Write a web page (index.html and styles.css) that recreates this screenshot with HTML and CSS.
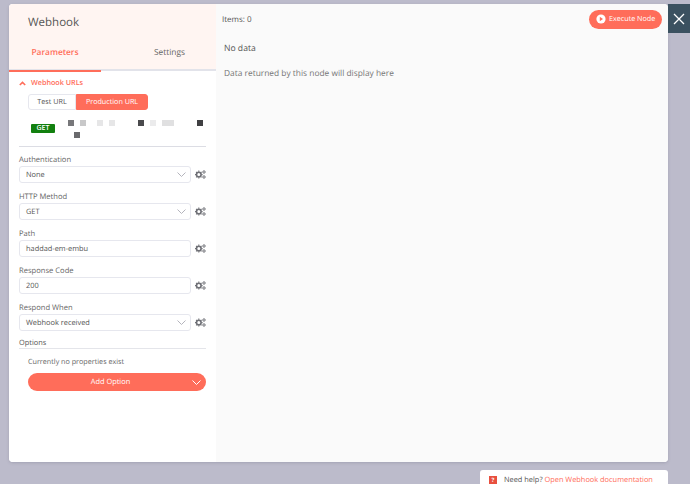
FILE: index.html
```html
<!DOCTYPE html>
<html lang="en">
<head>
<meta charset="utf-8">
<title>Webhook</title>
<link rel="stylesheet" href="styles.css">
</head>
<body>
<svg class="defs" width="0" height="0" aria-hidden="true">
  <symbol id="gears" viewBox="0 0 11 9">
    <g fill="none" stroke="#6f7076">
      <circle cx="3.8" cy="4.6" r="2.3" stroke-width="1.6"/>
      <path d="M3.8.6v1.2M3.8 7.4v1.2M0 4.6h1.2M6.4 4.6h1.2M1.1 1.9l.9.9M5.6 6.4l.9.9M1.1 7.3l.9-.9M5.6 2.8l.9-.9" stroke-width="1.1"/>
      <circle cx="9" cy="2" r="1.2" stroke-width="1"/>
      <circle cx="9" cy="7" r="1.2" stroke-width="1"/>
    </g>
  </symbol>
  <symbol id="chev" viewBox="0 0 9 5">
    <path d="M.5.5l4 4 4-4" fill="none" stroke="currentColor" stroke-width="1"/>
  </symbol>
</svg>
<div class="dialog">
  <aside class="params">
    <header class="head">
      <h1 class="title">Webhook</h1>
      <nav class="tabs">
        <span class="tab active">Parameters</span>
        <span class="tab">Settings</span>
      </nav>
    </header>
    <div class="body">
      <div class="section-title">
        <svg class="up" width="7" height="5" viewBox="0 0 7 5"><path d="M.8 4L3.5 1.4 6.2 4" fill="none" stroke="#ff6d5a" stroke-width="1.6"/></svg>
        <span>Webhook URLs</span>
      </div>
      <div class="toggle">
        <span class="seg">Test URL</span>
        <span class="seg on">Production URL</span>
      </div>
      <div class="url">
        <span class="get">GET</span>
        <div class="redacted">
          <div class="red-row">
            <i class="sq s1 a"></i><i class="sq s2 b"></i><i class="sq s3 c"></i><i class="sq s4 c"></i><i class="sq s5 d"></i><i class="sq s6 e"></i><i class="sq s7 f"></i><i class="sq s8 e"></i>
          </div>
          <div class="red-row second"><i class="sq g"></i></div>
        </div>
      </div>
      <hr class="rule">
      <div class="field">
        <label class="lbl">Authentication</label>
        <div class="row"><div class="input">None<svg class="chev"><use href="#chev"/></svg></div><svg class="gear"><use href="#gears"/></svg></div>
      </div>
      <div class="field">
        <label class="lbl">HTTP Method</label>
        <div class="row"><div class="input">GET<svg class="chev"><use href="#chev"/></svg></div><svg class="gear"><use href="#gears"/></svg></div>
      </div>
      <div class="field">
        <label class="lbl">Path</label>
        <div class="row"><div class="input">haddad-em-embu</div><svg class="gear"><use href="#gears"/></svg></div>
      </div>
      <div class="field">
        <label class="lbl">Response Code</label>
        <div class="row"><div class="input">200</div><svg class="gear"><use href="#gears"/></svg></div>
      </div>
      <div class="field">
        <label class="lbl">Respond When</label>
        <div class="row"><div class="input">Webhook received<svg class="chev"><use href="#chev"/></svg></div><svg class="gear"><use href="#gears"/></svg></div>
      </div>
      <div class="options">Options</div>
      <p class="none">Currently no properties exist</p>
      <div class="add">Add Option<svg class="chev add-chev"><use href="#chev"/></svg></div>
    </div>
  </aside>
  <main class="output">
    <div class="out-top">
      <span class="items">Items: 0</span>
      <span class="exec">
        <svg width="10" height="10" viewBox="0 0 10 10"><circle cx="5" cy="5" r="4.6" fill="#fff"/><path d="M3.8 2.8L7 5 3.8 7.2z" fill="#ff6d5a"/></svg>
        Execute Node
      </span>
    </div>
    <h2 class="nodata">No data</h2>
    <p class="hint">Data returned by this node will display here</p>
  </main>
  <button class="close" aria-label="Close">
    <svg width="12" height="12" viewBox="0 0 12 12"><path d="M1 1l10 10M11 1L1 11" stroke="#fff" stroke-width="1.3"/></svg>
  </button>
</div>
<div class="help">
  <span class="q">?</span>
  <span>Need help? <a class="doc">Open Webhook documentation</a></span>
</div>
</body>
</html>
```
FILE: styles.css
```css
* { box-sizing: border-box; }
html, body { height: 484px; overflow: hidden; }
body {
  margin: 0;
  padding: 4px 0 0 9px;
  background: #bcbbcb;
  font-family: "Open Sans", sans-serif;
  font-size: 8px;
  color: #555;
  text-rendering: geometricPrecision;
}
.defs { position: absolute; }
.dialog {
  position: relative;
  display: flex;
  width: 659px;
  height: 458px;
  background: #fff;
  border-radius: 4px;
  box-shadow: 0 1px 3px rgba(90, 90, 110, .25);
}
.params { width: 207px; background: #fff; border-radius: 4px 0 0 4px; }
.head {
  height: 67px;
  background: #fff5f2;
  border-radius: 4px 0 0 0;
  border-bottom: 2px solid #e2e3ea;
}
.title {
  margin: 0;
  padding: 11px 0 0 19px;
  font-size: 11.5px;
  line-height: 16px;
  font-weight: 500;
  color: #555;
}
.tabs { display: flex; margin-top: 12px; height: 29px; }
.tab {
  width: 92px;
  text-align: center;
  line-height: 19px;
  font-size: 8.4px;
  color: #666;
}
.tab:last-child { width: 115px; padding-left: 22px; }
.tab.active {
  color: #ff6d5a;
  font-weight: 600;
  border-bottom: 2px solid #ff6d5a;
  height: 29px;
  margin-bottom: -2px;
}
.body { padding: 6px 10px 0; }
.section-title {
  display: flex;
  align-items: center;
  height: 12px;
  color: #ff6d5a;
  font-size: 7.2px;
  font-weight: 600;
}
.up { margin-right: 5px; }
.toggle {
  display: flex;
  margin: 5px 0 0 9px;
  width: 120px;
  height: 16px;
}
.seg {
  width: 48px;
  line-height: 15px;
  text-align: center;
  font-size: 7.2px;
  font-weight: 500;
  color: #555;
  background: #fff;
  border: 1px solid #e6e7ee;
  border-radius: 3px 0 0 3px;
}
.seg.on {
  width: 72px;
  color: #fff;
  background: #ff6d5a;
  border-color: #ff6d5a;
  border-radius: 0 3px 3px 0;
}
.url { display: flex; margin: 10px 0 0 12px; height: 26px; }
.get {
  width: 24px;
  height: 9px;
  margin-top: 4px;
  background: #12800f;
  color: #fff;
  border-radius: 1px;
  font-size: 7px;
  font-weight: 600;
  line-height: 9px;
  text-align: center;
}
.redacted { margin-left: 13px; width: 137px; }
.red-row { display: flex; height: 6px; }
.second { margin-top: 6px; padding-left: 6px; }
.sq { display: block; height: 6px; width: 6px; flex: none; }
.a { background: #77777a; }
.b { background: #c8c8c9; }
.c { background: #e6e6e7; }
.d { background: #4a4a4d; }
.e { background: #ebebec; }
.f { background: #e0e0e1; width: 12px; }
.g { background: #6a6a6d; }
.s2 { margin-left: 6px; }
.s3 { margin-left: 11px; }
.s4 { margin-left: 6px; }
.s5 { margin-left: 23px; }
.s6 { margin-left: 6px; }
.s7 { margin-left: 6px; }
.s8 { margin-left: 23px; background: #3f3f42; }
.rule { margin: 0 0 -1px; border: 0; border-top: 1px solid #dcdde4; }
.field { margin-top: 8px; }
.lbl { display: block; height: 12px; line-height: 12px; font-size: 7.6px; color: #666; }
.row { display: flex; align-items: center; height: 17px; }
.input {
  display: flex;
  align-items: center;
  justify-content: space-between;
  width: 172px;
  height: 17px;
  padding: 0 4px 0 6px;
  background: #fff;
  border: 1px solid #e6e7ee;
  border-radius: 3px;
  font-size: 7.4px;
  color: #555;
}
.chev { width: 9px; height: 5px; color: #b4b4bc; }
.gear { width: 11px; height: 9px; margin-left: 4px; }
.options {
  margin-top: 6px;
  height: 12px;
  line-height: 12px;
  font-size: 7.4px;
  font-weight: 500;
  color: #555;
  border-bottom: 1px solid #e4e5ea;
}
.none { margin: 7px 0 0 9px; line-height: 12px; font-size: 7.2px; color: #666; }
.add {
  position: relative;
  display: block;
  margin: 5px 0 0 9px;
  width: 178px;
  height: 18px;
  padding-right: 13px;
  border-radius: 9px;
  background: #ff6d5a;
  color: #fff;
  font-size: 7.4px;
  font-weight: 500;
  line-height: 18px;
  text-align: center;
}
.add-chev { position: absolute; right: 5px; top: 7px; color: #fff; }
.output {
  flex: 1;
  background: #fafafa;
  border-radius: 0 4px 4px 0;
  padding: 0 6px;
  color: #666;
}
.out-top {
  display: flex;
  justify-content: space-between;
  align-items: center;
  height: 30px;
}
.items { font-size: 8px; font-weight: 500; color: #555; }
.exec {
  display: flex;
  align-items: center;
  gap: 3px;
  width: 73px;
  height: 19px;
  padding-left: 7px;
  background: #ff6d5a;
  border-radius: 10px;
  color: #fff;
  font-size: 7.2px;
  font-weight: 500;
}
.nodata {
  margin: 8px 0 0 2px;
  font-size: 8.6px;
  line-height: 12px;
  font-weight: 500;
  color: #555;
}
.hint { margin: 14px 0 0 2px; font-size: 8.4px; line-height: 12px; color: #777; }
.close {
  position: absolute;
  left: 659px;
  top: 0;
  width: 22px;
  height: 29px;
  padding: 0;
  border: 0;
  background: #3b5160;
  display: flex;
  align-items: center;
  justify-content: center;
}
.help {
  display: flex;
  align-items: center;
  gap: 7px;
  width: 188px;
  height: 30px;
  margin: 8px 0 0 471px;
  padding: 0 0 10px 9px;
  background: #fff;
  border-radius: 3px;
  font-size: 7.4px;
  color: #555;
}
.q {
  width: 8px;
  height: 8px;
  background: #e8503f;
  color: #fff;
  font-size: 6px;
  font-weight: 700;
  line-height: 8px;
  text-align: center;
}
.doc { color: #ff6d5a; }
```
